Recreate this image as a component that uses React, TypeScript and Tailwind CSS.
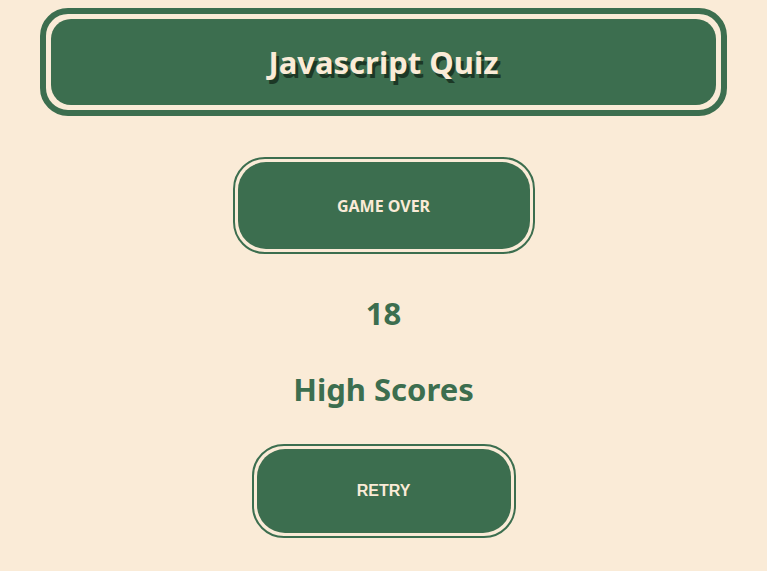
export default function App() {
  return (
    <div className="min-h-screen bg-[#faebd7] flex flex-col items-center pt-[8px] font-['Noto_Sans',sans-serif]">
      <header className="w-[687px] border-[6px] border-[#3c6e4f] rounded-[28px] bg-[#faebd7]">
        <div className="h-[86px] m-[5px] rounded-[20px] bg-[#3c6e4f] flex items-center justify-center">
          <h1 className="text-[31px] font-bold text-[#faebd7] [text-shadow:3px_4px_0_#1c3826]">
            Javascript Quiz
          </h1>
        </div>
      </header>

      <div className="mt-[41px] w-[302px] border-[2px] border-[#3c6e4f] rounded-[32px] bg-[#faebd7]">
        <div className="h-[87px] m-[3px] rounded-[28px] bg-[#3c6e4f] flex items-center justify-center">
          <span className="text-[16px] font-bold text-[#faebd7]">GAME OVER</span>
        </div>
      </div>

      <h2 className="mt-[39px] text-[31px] font-bold leading-[40px] text-[#3c6e4f]">18</h2>
      <h2 className="mt-[36px] text-[31px] font-bold leading-[40px] text-[#3c6e4f]">High Scores</h2>

      <button className="mt-[35px] w-[264px] border-[2px] border-[#3c6e4f] rounded-[32px] bg-[#faebd7]">
        <div className="h-[84px] m-[3px] rounded-[28px] bg-[#3c6e4f] flex items-center justify-center">
          <span className="text-[16px] font-bold text-[#faebd7] font-['Liberation_Sans',Arial,sans-serif]">RETRY</span>
        </div>
      </button>
    </div>
  );
}
